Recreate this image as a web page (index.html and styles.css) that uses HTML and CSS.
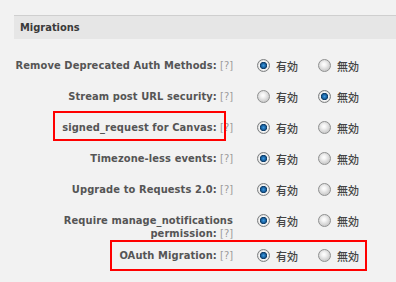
FILE: index.html
```html
<!DOCTYPE html>
<html>
<head>
<meta charset="utf-8">
<link rel="stylesheet" href="styles.css">
</head>
<body>
<div class="panel">
  <h3 class="bar">Migrations</h3>
  <div class="table">
    <div class="row">
      <div class="th"><b>Remove Deprecated Auth Methods:</b> <span class="help">[?]</span></div>
      <div class="td">
        <label class="opt"><input class="radio" type="radio" name="r1" checked><span>有効</span></label>
        <label class="opt"><input class="radio" type="radio" name="r1"><span>無効</span></label>
      </div>
    </div>
    <div class="row">
      <div class="th"><b>Stream post URL security:</b> <span class="help">[?]</span></div>
      <div class="td">
        <label class="opt"><input class="radio" type="radio" name="r2"><span>有効</span></label>
        <label class="opt"><input class="radio" type="radio" name="r2" checked><span>無効</span></label>
      </div>
    </div>
    <div class="row">
      <div class="th"><b>signed_request for Canvas:</b> <span class="help">[?]</span></div>
      <div class="td">
        <label class="opt"><input class="radio" type="radio" name="r3" checked><span>有効</span></label>
        <label class="opt"><input class="radio" type="radio" name="r3"><span>無効</span></label>
      </div>
    </div>
    <div class="row">
      <div class="th"><b>Timezone-less events:</b> <span class="help">[?]</span></div>
      <div class="td">
        <label class="opt"><input class="radio" type="radio" name="r4" checked><span>有効</span></label>
        <label class="opt"><input class="radio" type="radio" name="r4"><span>無効</span></label>
      </div>
    </div>
    <div class="row">
      <div class="th"><b>Upgrade to Requests 2.0:</b> <span class="help">[?]</span></div>
      <div class="td">
        <label class="opt"><input class="radio" type="radio" name="r5" checked><span>有効</span></label>
        <label class="opt"><input class="radio" type="radio" name="r5"><span>無効</span></label>
      </div>
    </div>
    <div class="row">
      <div class="th"><b>Require manage_notifications permission:</b> <span class="help">[?]</span></div>
      <div class="td">
        <label class="opt"><input class="radio" type="radio" name="r6" checked><span>有効</span></label>
        <label class="opt"><input class="radio" type="radio" name="r6"><span>無効</span></label>
      </div>
    </div>
    <div class="row">
      <div class="th"><b>OAuth Migration:</b> <span class="help">[?]</span></div>
      <div class="td">
        <label class="opt"><input class="radio" type="radio" name="r7" checked><span>有効</span></label>
        <label class="opt"><input class="radio" type="radio" name="r7"><span>無効</span></label>
      </div>
    </div>
  </div>
  <div class="mark mark-1"></div>
  <div class="mark mark-2"></div>
</div>
</body>
</html>
```

FILE: styles.css
```css
html, body {
  margin: 0;
  padding: 0;
  background: #f2f2f2;
}
body {
  font-family: "DejaVu Sans", "Noto Sans CJK JP", sans-serif;
  font-stretch: condensed;
  font-size: 11px;
  color: #555;
}
.panel {
  position: relative;
  padding: 15px 0 0 14px;
  height: 267px;
}
.bar {
  margin: 0;
  height: 23px;
  border-top: 1px solid #cfcfcf;
  background: #e6e6e6;
  padding-left: 6px;
  font-size: 11px;
  font-weight: bold;
  line-height: 23px;
  color: #3a3a3a;
}
.table {
  margin-top: 11px;
}
.row {
  display: grid;
  grid-template-columns: 229px 1fr;
  align-items: start;
}
.th {
  padding: 9px 10px 0 0;
  line-height: 13px;
  text-align: right;
}
.th b {
  font-weight: bold;
  color: #555;
  letter-spacing: 0.1px;
}
.help {
  color: #9a9a9a;
}
.td {
  height: 31px;
  display: flex;
  align-items: center;
  padding-left: 14px;
}
.opt {
  display: flex;
  align-items: center;
  gap: 6px;
  margin-right: 20px;
  font-family: "Noto Sans CJK JP", sans-serif;
  font-size: 11px;
  font-weight: 500;
  color: #444;
}
.radio {
  -webkit-appearance: none;
  appearance: none;
  width: 13px;
  height: 13px;
  margin: 0;
  border-radius: 50%;
  border: 1px solid #8f9090;
  background: radial-gradient(circle at 45% 40%, #ffffff 0, #f4f4f4 2px, #cfcfcf 6px);
}
.radio:checked {
  border-color: #7d7f80;
  background: radial-gradient(circle at 50% 50%, #3d9be0 0, #1d67a8 2px, #0d3a63 3.3px, #f6f6f6 4px, #d6d6d6 6px);
}
.mark {
  position: absolute;
  border: 2px solid #ff0000;
}
.mark-1 {
  left: 53px;
  top: 111px;
  width: 169px;
  height: 26px;
}
.mark-2 {
  left: 110px;
  top: 240px;
  width: 253px;
  height: 27px;
}
```
